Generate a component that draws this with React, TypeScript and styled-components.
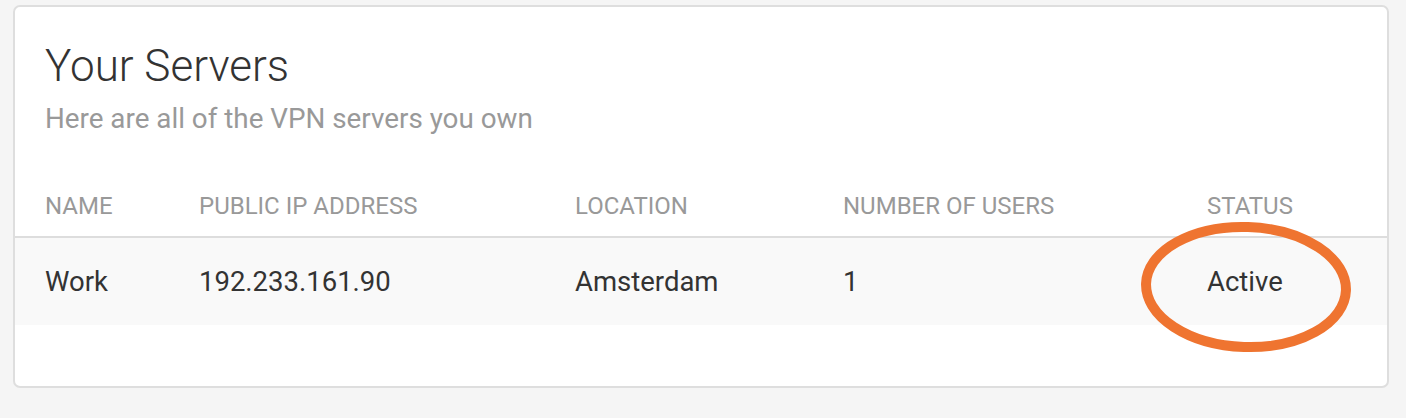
import React from 'react';
import styled, { createGlobalStyle } from 'styled-components';

const GlobalStyle = createGlobalStyle`
  html, body {
    margin: 0;
    padding: 0;
    background: #f5f5f5;
    font-family: Roboto, "Liberation Sans", sans-serif;
  }
`;

const Page = styled.div`
  padding: 5px 17px 30px 13px;
`;

const Card = styled.div`
  position: relative;
  background: #ffffff;
  border: 2px solid #dedede;
  border-radius: 7px;
  height: 383px;
  box-sizing: border-box;
`;

const CardHead = styled.div`
  padding: 33px 30px 0 30px;
`;

const Title = styled.h1`
  margin: 0;
  font-size: 44px;
  font-weight: 300;
  line-height: 52px;
  color: #333333;
`;

const Subtitle = styled.p`
  margin: 10px 0 0 0;
  font-size: 27.8px;
  font-weight: 400;
  line-height: 34px;
  color: #999999;
`;

const Row = styled.div<{ $head?: boolean }>`
  display: grid;
  grid-template-columns: 154px 376px 268px 364px 1fr;
  padding-left: 30px;
  align-items: center;
  height: ${(p) => (p.$head ? '52px' : '87px')};
  background: ${(p) => (p.$head ? '#ffffff' : '#f9f9f9')};
  border-bottom: ${(p) => (p.$head ? '2px solid #dddddd' : 'none')};
  margin-top: ${(p) => (p.$head ? '48px' : '0')};
`;

const HeadCell = styled.div`
  font-size: 24px;
  font-weight: 400;
  color: #999999;
  text-transform: uppercase;
  padding-bottom: 8px;
`;

const Cell = styled.div`
  font-size: 27.5px;
  font-weight: 400;
  color: #333333;
`;

const Circle = styled.svg`
  position: absolute;
  left: 1119px;
  top: 208px;
  pointer-events: none;
`;

const servers = [
  { name: 'Work', ip: '192.233.161.90', location: 'Amsterdam', users: '1', status: 'Active' },
];

const App = () => (
  <>
    <GlobalStyle />
    <Page>
      <Card>
        <CardHead>
          <Title>Your Servers</Title>
          <Subtitle>Here are all of the VPN servers you own</Subtitle>
        </CardHead>
        <Row $head>
          <HeadCell>Name</HeadCell>
          <HeadCell>Public IP Address</HeadCell>
          <HeadCell>Location</HeadCell>
          <HeadCell>Number of Users</HeadCell>
          <HeadCell>Status</HeadCell>
        </Row>
        {servers.map((s) => (
          <Row key={s.name}>
            <Cell>{s.name}</Cell>
            <Cell>{s.ip}</Cell>
            <Cell>{s.location}</Cell>
            <Cell>{s.users}</Cell>
            <Cell>{s.status}</Cell>
          </Row>
        ))}
        <Circle width="224" height="144" viewBox="0 0 224 144">
          <ellipse cx="112" cy="72" rx="100" ry="60" fill="none" stroke="#ef7430" strokeWidth="10" transform="rotate(2 112 72)" />
        </Circle>
      </Card>
    </Page>
  </>
);

export default App;
